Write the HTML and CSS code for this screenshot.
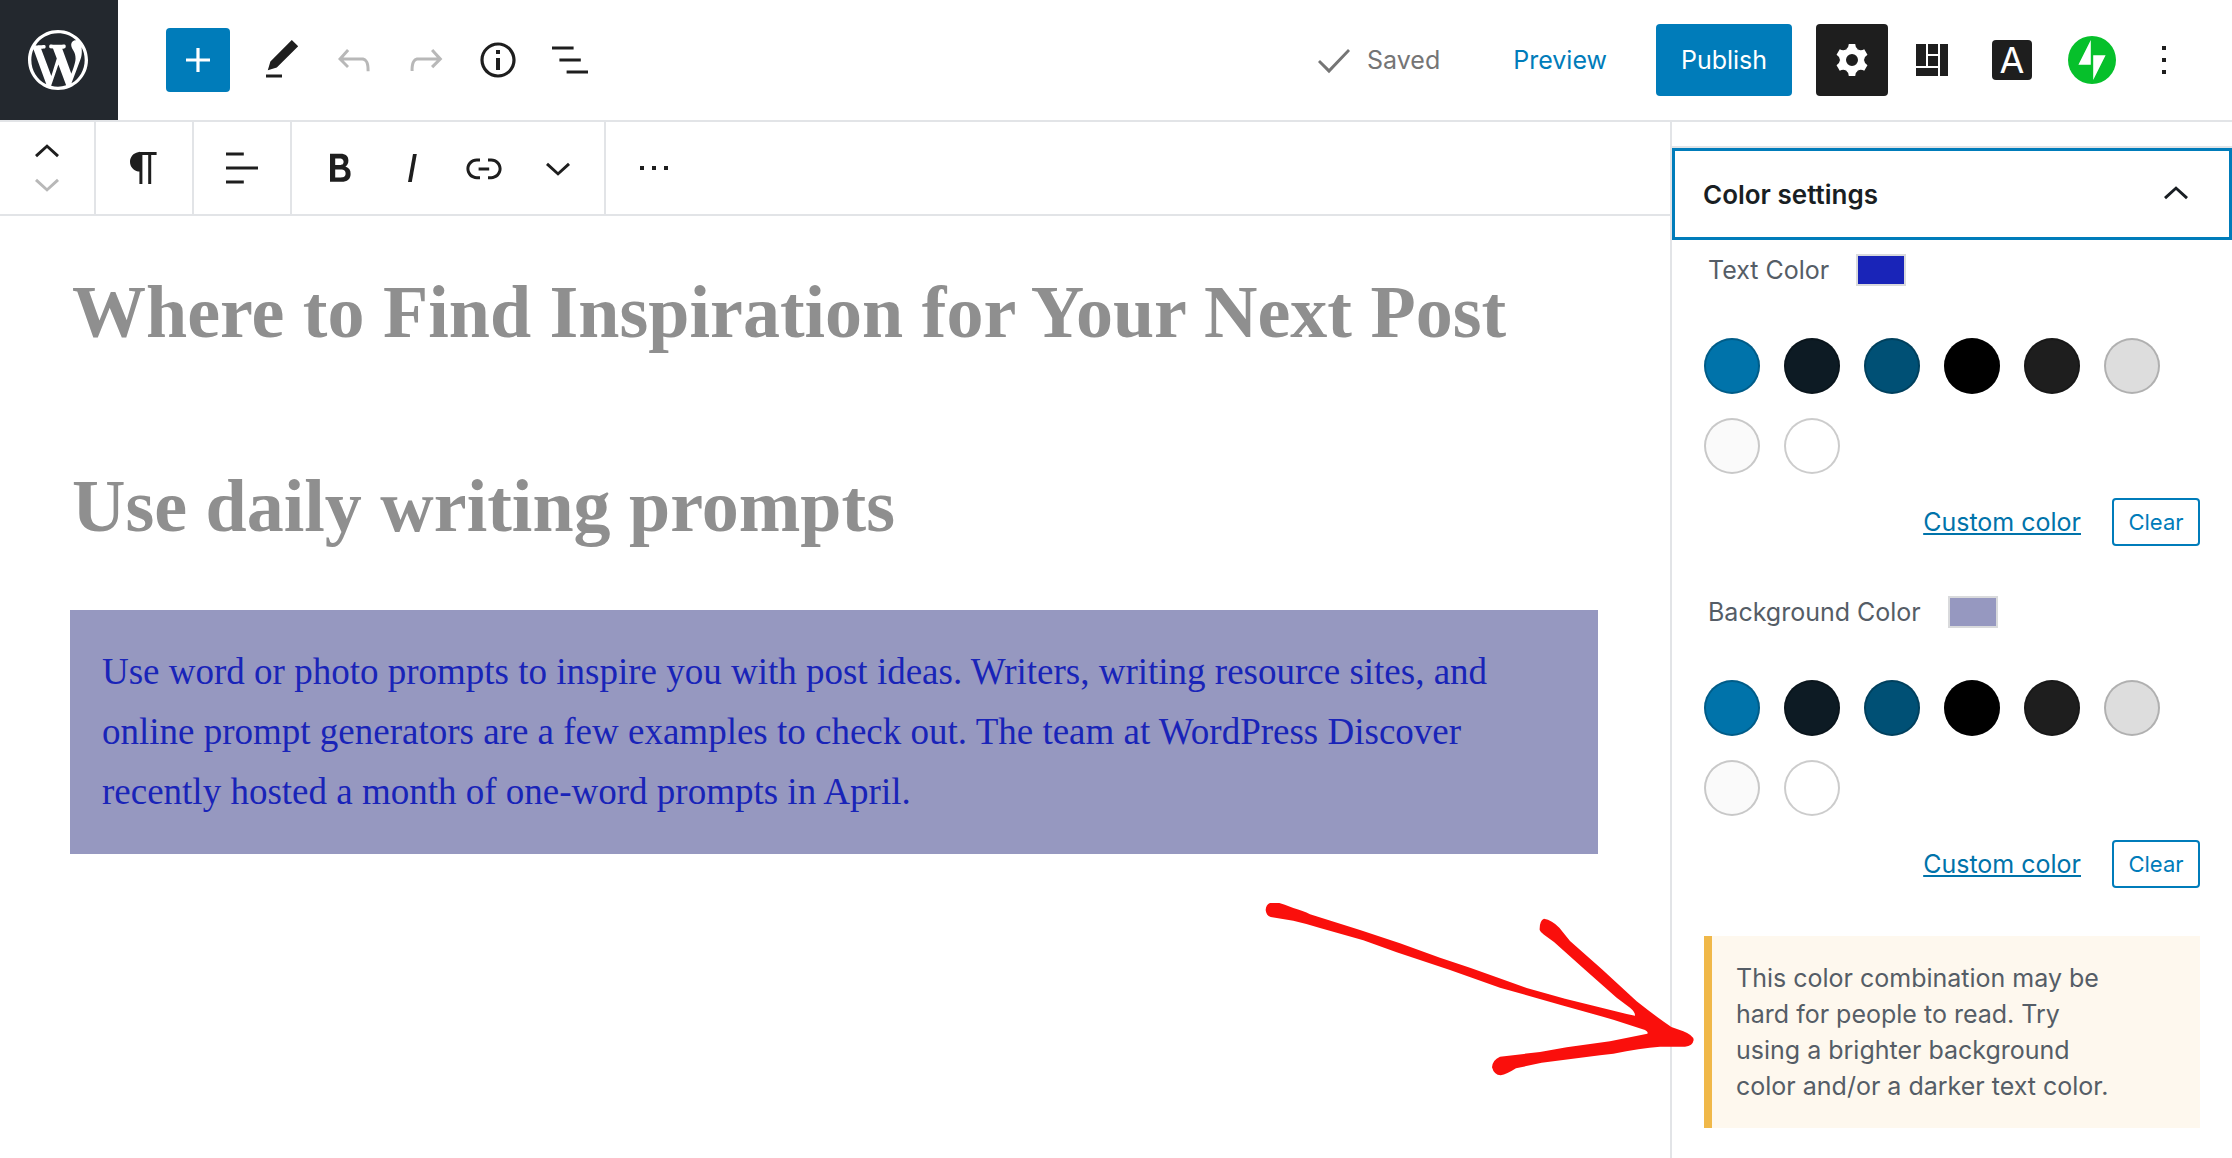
FILE: index.html
```html
<!DOCTYPE html>
<html lang="en">
<head>
<meta charset="utf-8">
<title>Edit Post</title>
<link rel="stylesheet" href="styles.css">
</head>
<body>
<div class="editor">
  <header class="header">
    <a class="site-logo" href="#" aria-label="View posts">
      <svg viewBox="0 0 20 20" width="60" height="60"><path d="M20 10c0-5.51-4.49-10-10-10C4.48 0 0 4.49 0 10c0 5.52 4.48 10 10 10 5.51 0 10-4.48 10-10zM7.78 15.37L4.37 6.22c.55-.02 1.17-.08 1.17-.08.5-.06.44-1.13-.06-1.11 0 0-1.45.11-2.37.11-.18 0-.37 0-.58-.01C4.12 2.69 6.87 1.11 10 1.11c2.33 0 4.45.87 6.05 2.34-.68-.11-1.65.39-1.65 1.58 0 .74.45 1.36.9 2.1.35.61.55 1.36.55 2.46 0 1.49-1.4 5-1.4 5l-3.03-8.37c.54-.02.82-.17.82-.17.5-.05.44-1.25-.06-1.22 0 0-1.44.12-2.38.12-.87 0-2.33-.12-2.33-.12-.5-.03-.56 1.2-.06 1.22l.92.08 1.26 3.41zM17.41 10c.24-.64.74-1.87.43-4.25.7 1.29 1.05 2.71 1.05 4.25 0 3.29-1.73 6.24-4.4 7.78.97-2.59 1.94-5.2 2.92-7.78zM6.1 18.09C3.12 16.65 1.11 13.53 1.11 10c0-1.3.23-2.48.72-3.59C3.25 10.3 4.67 14.2 6.1 18.09zm4.03-6.63l2.58 6.98c-.86.29-1.76.45-2.71.45-.79 0-1.57-.11-2.29-.33.81-2.38 1.62-4.74 2.42-7.1z"/></svg>
    </a>
    <div class="header-tools">
      <button class="add-block" aria-label="Add block"><svg viewBox="0 0 24 24"><path d="M18 11.2h-5.2V6h-1.6v5.2H6v1.6h5.2V18h1.6v-5.2H18z"/></svg></button>
      <button class="tool" aria-label="Edit"><svg viewBox="0 0 24 24"><path d="M20.1 5.1L16.9 2 6.2 12.7l-1.3 4.4 4.5-1.3L20.1 5.1zM4 20.8h8v-1.5H4v1.5z"/></svg></button>
      <button class="tool" aria-label="Undo" disabled><svg viewBox="0 0 24 24"><path d="M18.3 11.7c-.6-.6-1.4-.9-2.3-.9H6.7l2.9-3.3-1.1-1-4.5 5L8.5 16l1-1-2.7-2.7H16c.5 0 .9.2 1.3.5 1 1 1 3.4 1 4.5v.3h1.5v-.2c0-1.5 0-4.3-1.5-5.7z"/></svg></button>
      <button class="tool" aria-label="Redo" disabled><svg viewBox="0 0 24 24"><path d="M15.6 6.5l-1.1 1 2.9 3.3H8c-.9 0-1.7.3-2.3.9-1.4 1.5-1.4 4.2-1.4 5.6v.2h1.5v-.3c0-1.1 0-3.5 1-4.5.3-.3.7-.5 1.3-.5h9.2L14.5 15l1.1 1.1 4.6-4.6-4.6-5z"/></svg></button>
      <button class="tool" aria-label="Details"><svg viewBox="0 0 24 24"><path d="M12 3.2c-4.8 0-8.8 3.9-8.8 8.8 0 4.8 3.9 8.8 8.8 8.8 4.8 0 8.8-3.9 8.8-8.8 0-4.8-4-8.8-8.8-8.8zm0 16c-4 0-7.2-3.3-7.2-7.2C4.8 8 8 4.8 12 4.8s7.2 3.3 7.2 7.2c0 4-3.2 7.2-7.2 7.2zM11 17h2v-6h-2v6zm0-8h2V7h-2v2z"/></svg></button>
      <button class="tool" aria-label="Outline"><svg viewBox="0 0 24 24"><path d="M3 5.2h10.8v1.6H3zM6.7 11.2h10.7v1.6H6.7zM10.3 17.2H21v1.6H10.3z"/></svg></button>
    </div>
    <div class="header-settings">
      <span class="saved"><svg viewBox="0 0 24 24"><path d="M9 18.6L3.5 13l1-1L9 16.4l9.5-9.9 1 1z"/></svg>Saved</span>
      <button class="preview">Preview</button>
      <button class="publish">Publish</button>
      <div class="plugins">
        <button class="tool tool-active" aria-label="Settings"><svg viewBox="0 0 24 24"><g transform="translate(12 12)"><circle r="4.5" fill="none" stroke="currentColor" stroke-width="3"/><path id="tooth" d="M-1.6-8H1.6Q1.6-6.2 3-5.2H-3Q-1.6-6.2-1.6-8z"/><use href="#tooth" transform="rotate(60)"/><use href="#tooth" transform="rotate(120)"/><use href="#tooth" transform="rotate(180)"/><use href="#tooth" transform="rotate(240)"/><use href="#tooth" transform="rotate(300)"/></g></svg></button>
        <button class="tool" aria-label="Layout grid"><svg viewBox="0 0 24 24"><path d="M4 4h5v11H4zM10 4h5v5h-5zM10 10h5v5h-5zM4 16h11v4H4zM16 4h4v16h-4z"/></svg></button>
        <button class="tool" aria-label="Global styles"><span class="letter-badge">A</span></button>
        <button class="tool" aria-label="Jetpack"><svg viewBox="0 0 24 24"><circle cx="12" cy="12" r="12" fill="#06c02b"/><path fill="#fff" d="M11.4 2v12.4H5.2zM12.6 22V9.6h6.2z"/></svg></button>
      </div>
      <button class="tool" aria-label="Options"><svg viewBox="0 0 24 24"><path d="M13 19h-2v-2h2v2zm0-6h-2v-2h2v2zm0-6h-2V5h2v2z"/></svg></button>
    </div>
  </header>

  <main class="content">
    <div class="block-toolbar" role="toolbar" aria-label="Block tools">
      <div class="group movers">
        <button class="mover" aria-label="Move up"><svg viewBox="0 0 24 24"><path d="M7 14.6L12 10l5 4.6 1-1.1-6-5.4-6 5.4z"/></svg></button>
        <button class="mover" aria-label="Move down" disabled><svg viewBox="0 0 24 24"><path d="M17 9.4L12 14 7 9.4l-1 1.1 6 5.4 6-5.4z"/></svg></button>
      </div>
      <div class="group">
        <button class="tool" aria-label="Paragraph"><svg viewBox="0 0 24 24"><path d="M18.3 4H9.9v-.1l-.9.2c-2.3.4-4 2.4-4 4.8s1.7 4.4 4 4.8l.7.1V20h1.5V5.5h2.9V20h1.5V5.5h2.7V4z"/></svg></button>
      </div>
      <div class="group">
        <button class="tool" aria-label="Align"><svg viewBox="0 0 24 24"><path d="M4 19.8h8.9v-1.5H4v1.5zm8.9-15.6H4v1.5h8.9V4.2zm-8.9 7v1.5h16v-1.5H4z"/></svg></button>
      </div>
      <div class="group">
        <button class="tool" aria-label="Bold"><svg viewBox="0 0 24 24"><path d="M14.7 11.3c1-.6 1.5-1.6 1.5-3 0-2.3-1.3-3.4-4-3.4H7v14h5.8c1.4 0 2.5-.3 3.3-1 .8-.7 1.2-1.7 1.2-2.9.1-1.9-.8-3.1-2.6-3.7zm-5.1-4h2.3c.6 0 1.1.1 1.4.4.3.3.5.7.5 1.2s-.2 1-.5 1.2c-.3.3-.8.4-1.4.4H9.6V7.3zm4.6 9c-.4.3-1 .4-1.7.4H9.6v-3.9h2.9c.7 0 1.3.2 1.7.5.4.3.6.8.6 1.5s-.2 1.2-.6 1.5z"/></svg></button>
        <button class="tool" aria-label="Italic"><svg viewBox="0 0 24 24"><path d="M12.5 5L10 19h1.9l2.5-14z"/></svg></button>
        <button class="tool" aria-label="Link"><svg viewBox="0 0 24 24"><path d="M15.6 7.2H14v1.5h1.6c2 0 3.7 1.7 3.7 3.7s-1.7 3.7-3.7 3.7H14v1.5h1.6c2.8 0 5.2-2.3 5.2-5.2 0-2.9-2.3-5.2-5.2-5.2zM4.7 12.4c0-2 1.7-3.7 3.7-3.7H10V7.2H8.4c-2.9 0-5.2 2.3-5.2 5.2 0 2.9 2.3 5.2 5.2 5.2H10v-1.5H8.4c-2 0-3.7-1.7-3.7-3.7zm4.6.9h5.3v-1.5H9.3v1.5z"/></svg></button>
        <button class="tool" aria-label="More rich text controls"><svg viewBox="0 0 24 24"><path d="M18 9.4L13 14 8 9.4l-1 1.1 6 5.4 6-5.4z"/></svg></button>
      </div>
      <div class="group group-last">
        <button class="tool" aria-label="More options"><svg viewBox="0 0 24 24"><path d="M11 13h2v-2h-2v2zm-6 0h2v-2H5v2zm12-2v2h2v-2h-2z"/></svg></button>
      </div>
    </div>
    <article class="post">
      <h1 class="post-title">Where to Find Inspiration for Your Next Post</h1>
      <h2 class="post-heading">Use daily writing prompts</h2>
      <p class="post-paragraph">Use word or photo prompts to inspire you with post ideas. Writers, writing resource sites, and online prompt generators are a few examples to check out. The team at WordPress Discover recently hosted a month of one-word prompts in April.</p>
    </article>
  </main>

  <aside class="sidebar">
    <button class="panel-toggle" aria-expanded="true">Color settings<svg viewBox="0 0 24 24"><path d="M7 14.6L12 10l5 4.6 1-1.1-6-5.4-6 5.4z"/></svg></button>
    <div class="panel">
      <section class="color-control">
        <h3 class="color-label">Text Color<span class="indicator indicator-text"></span></h3>
        <div class="palette">
          <button class="swatch blue" aria-label="Blue"></button>
          <button class="swatch navy" aria-label="Navy"></button>
          <button class="swatch teal" aria-label="Dark blue"></button>
          <button class="swatch black" aria-label="Black"></button>
          <button class="swatch charcoal" aria-label="Charcoal"></button>
          <button class="swatch silver" aria-label="Silver"></button>
          <button class="swatch snow" aria-label="Snow"></button>
          <button class="swatch white" aria-label="White"></button>
        </div>
        <div class="color-actions"><a class="custom" href="#">Custom color</a><button class="clear">Clear</button></div>
      </section>
      <section class="color-control">
        <h3 class="color-label">Background Color<span class="indicator indicator-background"></span></h3>
        <div class="palette">
          <button class="swatch blue" aria-label="Blue"></button>
          <button class="swatch navy" aria-label="Navy"></button>
          <button class="swatch teal" aria-label="Dark blue"></button>
          <button class="swatch black" aria-label="Black"></button>
          <button class="swatch charcoal" aria-label="Charcoal"></button>
          <button class="swatch silver" aria-label="Silver"></button>
          <button class="swatch snow" aria-label="Snow"></button>
          <button class="swatch white" aria-label="White"></button>
        </div>
        <div class="color-actions"><a class="custom" href="#">Custom color</a><button class="clear">Clear</button></div>
      </section>
      <div class="notice">
        <p class="notice-text">This color combination may be hard for people to read. Try using a brighter background color and/or a darker text color.</p>
        <svg class="arrow" viewBox="0 0 1440 660" aria-hidden="true"><path d="M90 69Q78 74 77 90Q78 106 92 111L160 122Q200 131 240 144L370 181L470 217L630 270L780 323L960 374L1120 419L1215 450Q1226 456 1222 461L1110 484L980 502L900 516L780 530Q757 540 756 562Q762 585 782 586Q800 583 828 565L905 548L1080 526L1120 521Q1200 505 1260 500L1335 500Q1358 498 1361 480Q1360 466 1330 454L1294 441Q1240 404 1190 364L1085 267L990 183L958 143Q936 120 912 116Q898 122 899 150Q902 158 912 164L942 186L1035 269L1130 353L1170 383Q1186 396 1185 407L1160 402L1060 377L975 356L860 324L770 292L690 263L600 233L480 190L360 150L210 103Q190 92 160 84Q130 72 118 69Z"/></svg>
      </div>
    </div>
  </aside>
</div>
</body>
</html>
```
FILE: styles.css
```css
* { box-sizing: border-box; }

body {
  margin: 0;
  background: #fff;
  color: #1e1e1e;
  font-family: Inter, "Liberation Sans", sans-serif;
  font-size: 25px;
}

button {
  margin: 0;
  padding: 0;
  border: 0;
  background: none;
  color: inherit;
  font: inherit;
}

svg {
  flex: none;
  width: 48px;
  height: 48px;
  fill: currentColor;
}

.editor {
  display: grid;
  grid-template-columns: minmax(0, 1fr) 562px;
  grid-template-rows: auto 1fr;
  min-height: 100vh;
}

.header {
  grid-column: 1 / -1;
  display: flex;
  align-items: center;
  border-bottom: 2px solid #e2e4e7;
}

.site-logo {
  display: flex;
  align-items: center;
  justify-content: center;
  width: 118px;
  height: 120px;
  padding-right: 2px;
  background: #23282e;
  color: #fff;
}

.site-logo svg {
  width: 60px;
  height: 60px;
}

.header-tools {
  display: flex;
  align-items: center;
  margin-left: 48px;
}

.add-block {
  display: flex;
  align-items: center;
  justify-content: center;
  width: 64px;
  height: 64px;
  margin-right: 16px;
  border-radius: 4px;
  background: #007cba;
  color: #fff;
}

.tool {
  display: flex;
  align-items: center;
  justify-content: center;
  width: 72px;
  height: 72px;
  border-radius: 4px;
}

.tool:disabled,
.mover:disabled {
  color: #b8b8b8;
}

.tool-active {
  background: #1e1e1e;
  color: #fff;
}

.header-settings {
  display: flex;
  align-items: center;
  margin-left: auto;
  padding-right: 32px;
}

.saved {
  display: flex;
  align-items: center;
  gap: 8px;
  color: #757575;
}

.preview {
  margin: 0 49px 0 73px;
  color: #007cba;
}

.publish {
  width: 136px;
  height: 72px;
  border-radius: 4px;
  background: #007cba;
  color: #fff;
}

.plugins {
  display: flex;
  gap: 8px;
  margin-left: 24px;
}

.letter-badge {
  width: 40px;
  height: 40px;
  border-radius: 4px;
  background: #1e1e1e;
  color: #fff;
  font-size: 36px;
  line-height: 40px;
  text-align: center;
}

.block-toolbar {
  display: flex;
  height: 94px;
  border-bottom: 2px solid #e2e4e7;
}

.group {
  display: flex;
  align-items: center;
  padding: 0 12px;
  border-right: 2px solid #e2e4e7;
}

.group-last { border-right: 0; }

.movers {
  flex-direction: column;
  justify-content: center;
}

.mover {
  display: flex;
  align-items: center;
  justify-content: center;
  width: 70px;
  height: 32px;
}

.post {
  padding: 48px 72px 72px 70px;
  font-family: "Liberation Serif", serif;
}

.post-title,
.post-heading {
  margin: 0;
  padding-left: 2px;
  color: #8f8f8f;
  font-size: 74px;
  font-weight: 700;
  line-height: 96px;
}

.post-heading { margin-top: 98px; }

.post-paragraph {
  margin: 56px 0 0;
  padding: 32px;
  background: #9698c0;
  color: #1924b8;
  font-size: 37px;
  line-height: 60px;
}

.sidebar {
  padding-top: 24px;
  border-left: 2px solid #e2e4e7;
}

.panel-toggle {
  display: flex;
  align-items: center;
  justify-content: space-between;
  width: 100%;
  height: 92px;
  margin-top: 2px;
  padding: 0 29px 0 28px;
  border: 3px solid #007cba;
  box-shadow: 0 -2px #e2e4e7;
  color: #191e23;
  font-size: 26px;
  font-weight: 600;
}

.panel {
  padding: 14px 32px 30px;
  color: #555d66;
}

.color-control { margin-bottom: 50px; }

.color-label {
  display: flex;
  align-items: center;
  gap: 27px;
  height: 32px;
  margin: 0 0 52px 4px;
  font-size: 25px;
  font-weight: 400;
}

.indicator {
  width: 50px;
  height: 32px;
  border: 2px solid #d9dadc;
}

.indicator-text { background: #1924b8; }
.indicator-background { background: #9698c0; }

.palette {
  display: flex;
  flex-wrap: wrap;
  gap: 24px;
}

.swatch {
  width: 56px;
  height: 56px;
  border-radius: 50%;
  box-shadow: inset 0 0 0 2px rgba(0, 0, 0, 0.2);
}

.blue { background: #0073aa; }
.navy { background: #0d1b24; }
.teal { background: #005075; }
.black { background: #000; }
.charcoal { background: #1e1e1e; }
.silver { background: #ddd; }
.snow { background: #fafafa; }
.white { background: #fff; }

.color-actions {
  display: flex;
  align-items: center;
  justify-content: flex-end;
  gap: 31px;
  margin-top: 24px;
}

.custom { color: #0073aa; }

.clear {
  width: 88px;
  height: 48px;
  border: 2px solid #007cba;
  border-radius: 4px;
  color: #007cba;
  font-size: 22px;
}

.notice {
  position: relative;
  margin-top: -2px;
  padding: 24px 72px 24px 24px;
  border-left: 8px solid #f0b849;
  background: #fef8ee;
}

.notice-text {
  margin: 0;
  line-height: 36px;
}

/* Hand-drawn pointer that lies over the canvas and ends at the notice */
.arrow {
  position: absolute;
  top: -56px;
  left: -472px;
  width: 480px;
  height: 220px;
  fill: #fa0f0c;
}
```
